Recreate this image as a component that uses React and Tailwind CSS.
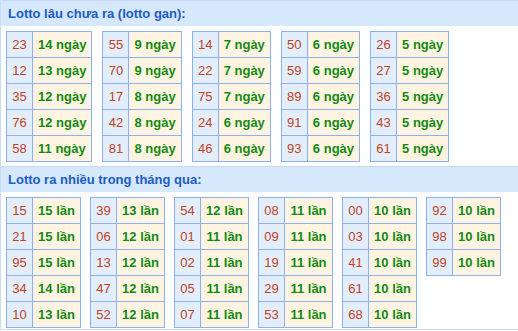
import React from "react";

const gan = [
  [["23", "14"], ["12", "13"], ["35", "12"], ["76", "12"], ["58", "11"]],
  [["55", "9"], ["70", "9"], ["17", "8"], ["42", "8"], ["81", "8"]],
  [["14", "7"], ["22", "7"], ["75", "7"], ["24", "6"], ["46", "6"]],
  [["50", "6"], ["59", "6"], ["89", "6"], ["91", "6"], ["93", "6"]],
  [["26", "5"], ["27", "5"], ["36", "5"], ["43", "5"], ["61", "5"]],
];

const nhieu = [
  [["15", "15"], ["21", "15"], ["95", "15"], ["34", "14"], ["10", "13"]],
  [["39", "13"], ["06", "12"], ["13", "12"], ["47", "12"], ["52", "12"]],
  [["54", "12"], ["01", "11"], ["02", "11"], ["05", "11"], ["07", "11"]],
  [["08", "11"], ["09", "11"], ["19", "11"], ["29", "11"], ["53", "11"]],
  [["00", "10"], ["03", "10"], ["41", "10"], ["61", "10"], ["68", "10"]],
  [["92", "10"], ["98", "10"], ["99", "10"]],
];

function Box({ rows, unit, valCls }) {
  return (
    <div className="border-l border-t border-[#8db0ef]">
      {rows.map(([n, v], i) => (
        <div key={i} className="flex h-[26px]">
          <div className="w-[26px] border-r border-b border-[#8db0ef] bg-[#e3eefd] flex items-center justify-center text-[13px] text-[#c2411f]">
            {n}
          </div>
          <div className={`${valCls} border-r border-b border-[#8db0ef] bg-[#fff4e1] flex items-center justify-center text-[13px] font-bold text-[#138a13] whitespace-nowrap`}>
            {v} {unit}
          </div>
        </div>
      ))}
    </div>
  );
}

function Section({ title, data, unit, pb, gap, valCls }) {
  return (
    <div className={pb}>
      <div className="h-[26px] bg-[#d5e8fc] border-t border-[#c3d9f2] pl-[7px] flex items-center text-[13px] font-bold text-[#1d5bc6]">
        {title}
      </div>
      <div className={`flex items-start ${gap} pl-[5px] pt-[5px]`}>
        {data.map((rows, i) => (
          <Box key={i} rows={rows} unit={unit} valCls={valCls} />
        ))}
      </div>
    </div>
  );
}

export default function App() {
  return (
    <div className="w-[518px] h-[331px] bg-white font-['Liberation_Sans',Arial,sans-serif] leading-4">
      <div className="border-l border-[#c8dcf2]">
        <Section
          title="Lotto lâu chưa ra (lotto gan):"
          data={gan}
          unit="ngày"
          pb="pb-[4px]"
          gap="gap-[10px]"
          valCls="px-[5px]"
        />
        <div className="border-b border-[#c8dcf2]">
          <Section
            title="Lotto ra nhiều trong tháng qua:"
            data={nhieu}
            unit="lần"
            pb="pb-[1px]"
            gap="gap-[9px]"
            valCls="w-[48px]"
          />
        </div>
      </div>
    </div>
  );
}
